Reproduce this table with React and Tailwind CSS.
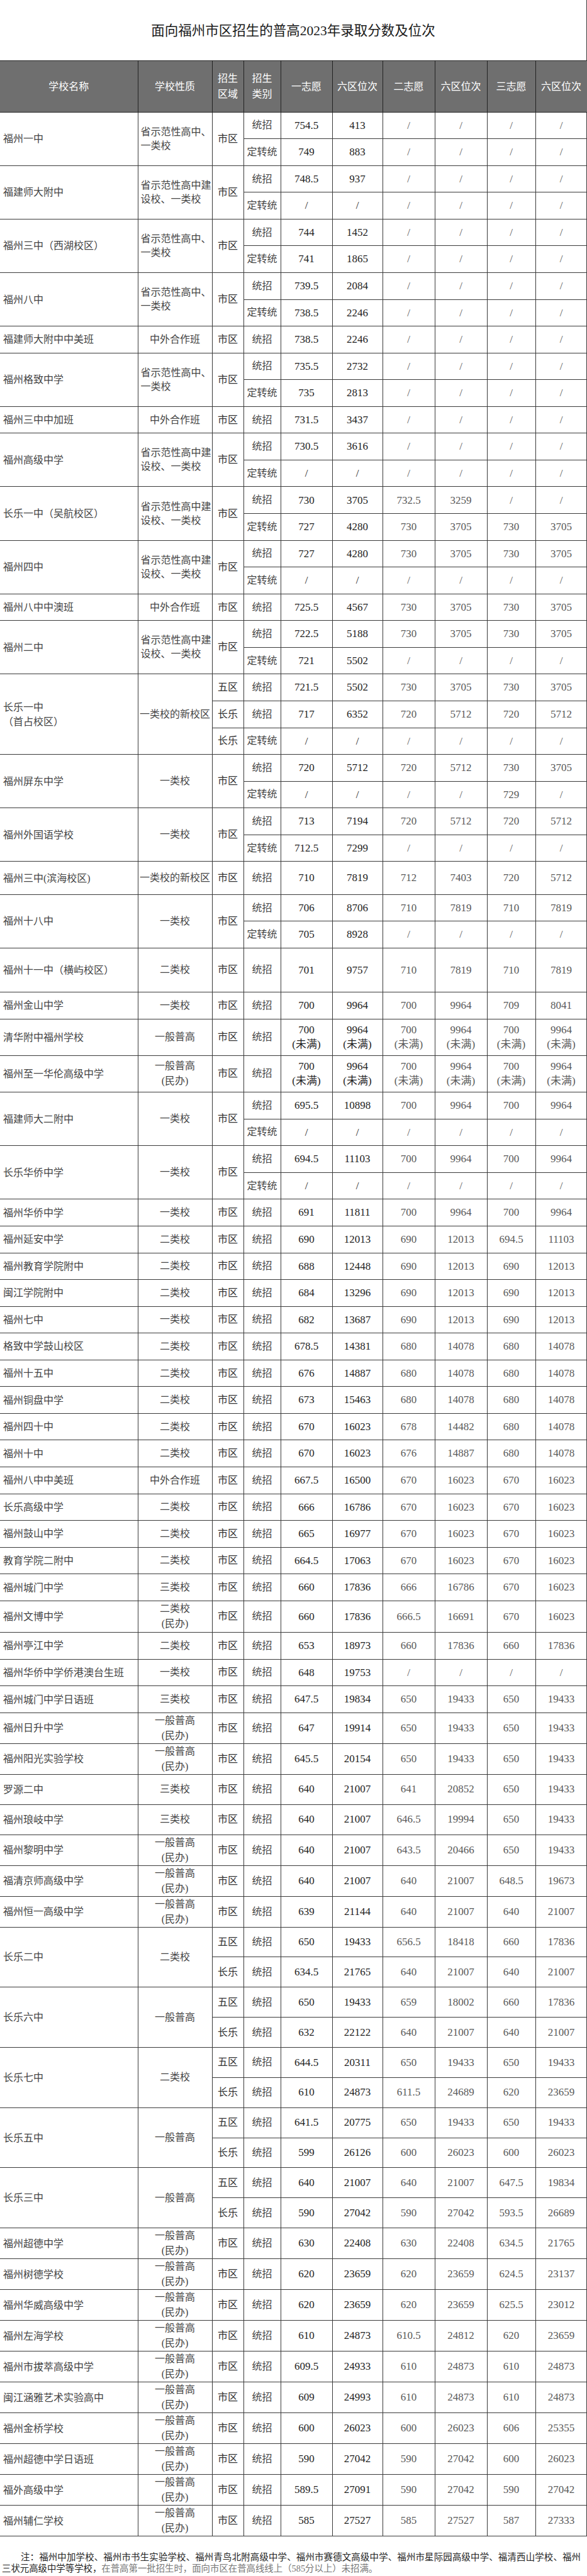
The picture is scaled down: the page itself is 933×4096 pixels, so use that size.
import React from 'react';

const A = 'h-[42.57px]';
const B = 'h-[47.87px]';

const T1 = { l: ['省示范性高中、', '一类校'], left: true };
const T2 = { l: ['省示范性高中建', '设校、一类校'], left: true };
const MB = { l: ['一般普高', '(民办)'] };
const EB = { l: ['二类校', '(民办)'] };
const UF = '统招 700* 9964* 700* 9964* 700* 9964*';
const NO = '定转统 / / / / / /';

const schools = [
  { n: '福州一中', t: T1, h: A, r: ['统招 754.5 413 / / / /', '定转统 749 883 / / / /'] },
  { n: '福建师大附中', t: T2, h: A, r: ['统招 748.5 937 / / / /', NO] },
  { n: '福州三中（西湖校区）', t: T1, h: A, r: ['统招 744 1452 / / / /', '定转统 741 1865 / / / /'] },
  { n: '福州八中', t: T1, h: A, r: ['统招 739.5 2084 / / / /', '定转统 738.5 2246 / / / /'] },
  { n: '福建师大附中中美班', t: '中外合作班', h: A, r: ['统招 738.5 2246 / / / /'] },
  { n: '福州格致中学', t: T1, h: A, r: ['统招 735.5 2732 / / / /', '定转统 735 2813 / / / /'] },
  { n: '福州三中中加班', t: '中外合作班', h: A, r: ['统招 731.5 3437 / / / /'] },
  { n: '福州高级中学', t: T2, h: A, r: ['统招 730.5 3616 / / / /', NO] },
  { n: '长乐一中（吴航校区）', t: T2, h: A, r: ['统招 730 3705 732.5 3259 / /', '定转统 727 4280 730 3705 730 3705'] },
  { n: '福州四中', t: T2, h: A, r: ['统招 727 4280 730 3705 730 3705', NO] },
  { n: '福州八中中澳班', t: '中外合作班', h: A, r: ['统招 725.5 4567 730 3705 730 3705'] },
  { n: '福州二中', t: T2, h: A, r: ['统招 722.5 5188 730 3705 730 3705', '定转统 721 5502 / / / /'] },
  { n: '长乐一中\n（首占校区）', t: '一类校的新校区', h: A, zs: ['五区', '长乐', '长乐'], r: ['统招 721.5 5502 730 3705 730 3705', '统招 717 6352 720 5712 720 5712', NO] },
  { n: '福州屏东中学', t: '一类校', h: A, r: ['统招 720 5712 720 5712 730 3705', '定转统 / / / / 729 /'] },
  { n: '福州外国语学校', t: '一类校', h: A, r: ['统招 713 7194 720 5712 720 5712', '定转统 712.5 7299 / / / /'] },
  { n: '福州三中(滨海校区)', t: '一类校的新校区', h: 'h-[52.5px]', r: ['统招 710 7819 712 7403 720 5712'] },
  { n: '福州十八中', t: '一类校', h: A, r: ['统招 706 8706 710 7819 710 7819', '定转统 705 8928 / / / /'] },
  { n: '福州十一中（横屿校区）', t: '二类校', h: 'h-[70px]', r: ['统招 701 9757 710 7819 710 7819'] },
  { n: '福州金山中学', t: '一类校', h: A, r: ['统招 700 9964 700 9964 709 8041'] },
  { n: '清华附中福州学校', t: '一般普高', h: 'h-[58.3px]', r: [UF] },
  { n: '福州至一华伦高级中学', t: MB, h: 'h-[58.3px]', r: [UF] },
  { n: '福建师大二附中', t: '一类校', h: A, r: ['统招 695.5 10898 700 9964 700 9964', NO] },
  { n: '长乐华侨中学', t: '一类校', h: A, r: ['统招 694.5 11103 700 9964 700 9964', NO] },
  { n: '福州华侨中学', t: '一类校', h: A, r: ['统招 691 11811 700 9964 700 9964'] },
  { n: '福州延安中学', t: '二类校', h: A, r: ['统招 690 12013 690 12013 694.5 11103'] },
  { n: '福州教育学院附中', t: '二类校', h: A, r: ['统招 688 12448 690 12013 690 12013'] },
  { n: '闽江学院附中', t: '二类校', h: A, r: ['统招 684 13296 690 12013 690 12013'] },
  { n: '福州七中', t: '一类校', h: A, r: ['统招 682 13687 690 12013 690 12013'] },
  { n: '格致中学鼓山校区', t: '二类校', h: A, r: ['统招 678.5 14381 680 14078 680 14078'] },
  { n: '福州十五中', t: '二类校', h: A, r: ['统招 676 14887 680 14078 680 14078'] },
  { n: '福州铜盘中学', t: '二类校', h: A, r: ['统招 673 15463 680 14078 680 14078'] },
  { n: '福州四十中', t: '二类校', h: A, r: ['统招 670 16023 678 14482 680 14078'] },
  { n: '福州十中', t: '二类校', h: A, r: ['统招 670 16023 676 14887 680 14078'] },
  { n: '福州八中中美班', t: '中外合作班', h: A, r: ['统招 667.5 16500 670 16023 670 16023'] },
  { n: '长乐高级中学', t: '二类校', h: A, r: ['统招 666 16786 670 16023 670 16023'] },
  { n: '福州鼓山中学', t: '二类校', h: A, r: ['统招 665 16977 670 16023 670 16023'] },
  { n: '教育学院二附中', t: '二类校', h: A, r: ['统招 664.5 17063 670 16023 670 16023'] },
  { n: '福州城门中学', t: '三类校', h: A, r: ['统招 660 17836 666 16786 670 16023'] },
  { n: '福州文博中学', t: EB, h: 'h-[50.3px]', r: ['统招 660 17836 666.5 16691 670 16023'] },
  { n: '福州亭江中学', t: '二类校', h: A, r: ['统招 653 18973 660 17836 660 17836'] },
  { n: '福州华侨中学侨港澳台生班', t: '一类校', h: A, r: ['统招 648 19753 / / / /'] },
  { n: '福州城门中学日语班', t: '三类校', h: A, r: ['统招 647.5 19834 650 19433 650 19433'] },
  { n: '福州日升中学', t: MB, h: B, r: ['统招 647 19914 650 19433 650 19433'] },
  { n: '福州阳光实验学校', t: MB, h: B, r: ['统招 645.5 20154 650 19433 650 19433'] },
  { n: '罗源二中', t: '三类校', h: B, r: ['统招 640 21007 641 20852 650 19433'] },
  { n: '福州琅岐中学', t: '三类校', h: B, r: ['统招 640 21007 646.5 19994 650 19433'] },
  { n: '福州黎明中学', t: MB, h: B, r: ['统招 640 21007 643.5 20466 650 19433'] },
  { n: '福清京师高级中学', t: MB, h: B, r: ['统招 640 21007 640 21007 648.5 19673'] },
  { n: '福州恒一高级中学', t: MB, h: B, r: ['统招 639 21144 640 21007 640 21007'] },
  { n: '长乐二中', t: '二类校', h: B, zs: ['五区', '长乐'], r: ['统招 650 19433 656.5 18418 660 17836', '统招 634.5 21765 640 21007 640 21007'] },
  { n: '长乐六中', t: '一般普高', h: B, zs: ['五区', '长乐'], r: ['统招 650 19433 659 18002 660 17836', '统招 632 22122 640 21007 640 21007'] },
  { n: '长乐七中', t: '二类校', h: B, zs: ['五区', '长乐'], r: ['统招 644.5 20311 650 19433 650 19433', '统招 610 24873 611.5 24689 620 23659'] },
  { n: '长乐五中', t: '一般普高', h: B, zs: ['五区', '长乐'], r: ['统招 641.5 20775 650 19433 650 19433', '统招 599 26126 600 26023 600 26023'] },
  { n: '长乐三中', t: '一般普高', h: B, zs: ['五区', '长乐'], r: ['统招 640 21007 640 21007 647.5 19834', '统招 590 27042 590 27042 593.5 26689'] },
  { n: '福州超德中学', t: MB, h: B, r: ['统招 630 22408 630 22408 634.5 21765'] },
  { n: '福州树德学校', t: MB, h: B, r: ['统招 620 23659 620 23659 624.5 23137'] },
  { n: '福州华威高级中学', t: MB, h: B, r: ['统招 620 23659 620 23659 625.5 23012'] },
  { n: '福州左海学校', t: MB, h: B, r: ['统招 610 24873 610.5 24812 620 23659'] },
  { n: '福州市拔萃高级中学', t: MB, h: B, r: ['统招 609.5 24933 610 24873 610 24873'] },
  { n: '闽江涵雅艺术实验高中', t: MB, h: B, r: ['统招 609 24993 610 24873 610 24873'] },
  { n: '福州金桥学校', t: MB, h: B, r: ['统招 600 26023 600 26023 606 25355'] },
  { n: '福州超德中学日语班', t: MB, h: B, r: ['统招 590 27042 590 27042 600 26023'] },
  { n: '福外高级中学', t: MB, h: B, r: ['统招 589.5 27091 590 27042 590 27042'] },
  { n: '福州辅仁学校', t: MB, h: B, r: ['统招 585 27527 585 27527 587 27333'] },
];

const cell = 'border-r border-b border-[#3a3a3a] p-0 align-middle';
const head = ['学校名称', '学校性质', '招生\n区域', '招生\n类别', '一志愿', '六区位次', '二志愿', '六区位次', '三志愿', '六区位次'];
const widths = ['w-[219px]', 'w-[118px]', 'w-[50px]', 'w-[59px]', 'w-[82px]', 'w-[80px]', 'w-[83px]', 'w-[83px]', 'w-[77px]', 'w-[82px]'];

const Value = ({ v }) => {
  if (v.endsWith('*')) {
    return (
      <div className="leading-[23px]">
        <div>{v.slice(0, -1)}</div>
        <div>(未满)</div>
      </div>
    );
  }
  return v;
};

const Type = ({ t }) => {
  if (typeof t === 'string') return <div className="text-center">{t}</div>;
  return (
    <div className={t.left ? 'text-left pl-[4px] leading-[22px]' : 'text-center leading-[24px]'}>
      {t.l.map((line) => (
        <div key={line} className="whitespace-nowrap">{line}</div>
      ))}
    </div>
  );
};

const App = () => {
  return (
    <div className="w-[933px] bg-white text-[#3c3c3c] font-normal [font-family:'Liberation_Serif','Noto_Sans_CJK_SC',serif]">
      <div className="border-r border-[#3a3a3a]">
        <div className="h-[96px] pt-[3px] flex items-center justify-center text-[21.5px] text-[#1a1a1a]">
          面向福州市区招生的普高2023年录取分数及位次
        </div>
        <table className="w-full table-fixed border-collapse border-t border-[#2a2a2a] text-[16px]">
          <colgroup>
            {widths.map((w, i) => (
              <col key={i} className={w} />
            ))}
          </colgroup>
          <thead>
            <tr className="h-[81.6px] bg-[#6f6f6f] text-white">
              {head.map((h, i) => (
                <th key={i} className="border-r border-b border-[#222] font-normal text-center align-middle leading-[25.5px]">
                  {h.split('\n').map((l) => (
                    <div key={l}>{l}</div>
                  ))}
                </th>
              ))}
            </tr>
          </thead>
          <tbody>
            {schools.map((s) =>
              s.r.map((row, i) => {
                const [cat, ...vals] = row.split(' ');
                return (
                  <tr key={s.n + i} className={s.h}>
                    {i === 0 && (
                      <td rowSpan={s.r.length} className={`${cell} pl-[5px] text-[#444] leading-[23px]`}>
                        {s.n.split('\n').map((l) => (
                          <div key={l} className="whitespace-nowrap">{l}</div>
                        ))}
                      </td>
                    )}
                    {i === 0 && (
                      <td rowSpan={s.r.length} className={`${cell} text-[#444]`}>
                        <Type t={s.t} />
                      </td>
                    )}
                    {s.zs ? (
                      <td className={`${cell} text-center text-[#333]`}>{s.zs[i]}</td>
                    ) : (
                      i === 0 && (
                        <td rowSpan={s.r.length} className={`${cell} text-center text-[#333]`}>
                          市区
                        </td>
                      )
                    )}
                    <td className={`${cell} text-center text-[#444] whitespace-nowrap`}>{cat}</td>
                    {vals.map((v, j) => (
                      <td
                        key={j}
                        className={`${cell} text-center text-[17px] ${j < 2 ? 'text-[#1e1e1e]' : 'text-[#5a5a5a]'}`}
                      >
                        <Value v={v} />
                      </td>
                    ))}
                  </tr>
                );
              })
            )}
          </tbody>
        </table>
      </div>
      <div className="mt-[24px] pl-[3px] pr-[10px] text-[14.4px] leading-[18px]">
        <div className="indent-[30px] text-justify [text-align-last:justify] text-[#222]">
          注：福州中加学校、福州市书生实验学校、福州青鸟北附高级中学、福州市赛德文高级中学、福州市星际园高级中学、福清西山学校、福州
        </div>
        <div>
          <span className="text-[#222]">三状元高级中学等学校，</span>
          <span className="text-[#777]">在普高第一批招生时，面向市区在普高线线上（585分以上）未招满。</span>
        </div>
      </div>
    </div>
  );
};

export default App;
